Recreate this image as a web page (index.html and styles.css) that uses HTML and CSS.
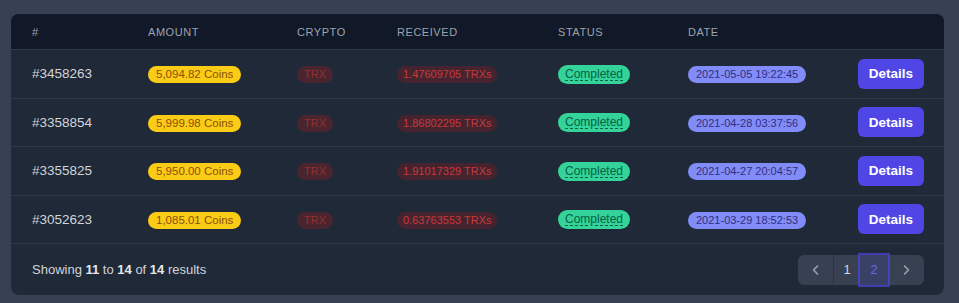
FILE: index.html
```html
<!DOCTYPE html>
<html lang="en">
<head>
<meta charset="utf-8">
<title>Transactions</title>
<link rel="stylesheet" href="styles.css">
</head>
<body>
<div class="card">
  <div class="row head">
    <div>#</div>
    <div>Amount</div>
    <div>Crypto</div>
    <div>Received</div>
    <div>Status</div>
    <div>Date</div>
    <div></div>
  </div>
  <div class="row">
    <div class="id">#3458263</div>
    <div><span class="badge coins">5,094.82 Coins</span></div>
    <div><span class="badge trx">TRX</span></div>
    <div><span class="badge recv">1.47609705 TRXs</span></div>
    <div><span class="badge done"><span class="ul">Completed</span></span></div>
    <div><span class="badge date">2021-05-05 19:22:45</span></div>
    <div><button class="btn">Details</button></div>
  </div>
  <div class="row">
    <div class="id">#3358854</div>
    <div><span class="badge coins">5,999.98 Coins</span></div>
    <div><span class="badge trx">TRX</span></div>
    <div><span class="badge recv">1.86802295 TRXs</span></div>
    <div><span class="badge done"><span class="ul">Completed</span></span></div>
    <div><span class="badge date">2021-04-28 03:37:56</span></div>
    <div><button class="btn">Details</button></div>
  </div>
  <div class="row">
    <div class="id">#3355825</div>
    <div><span class="badge coins">5,950.00 Coins</span></div>
    <div><span class="badge trx">TRX</span></div>
    <div><span class="badge recv">1.91017329 TRXs</span></div>
    <div><span class="badge done"><span class="ul">Completed</span></span></div>
    <div><span class="badge date">2021-04-27 20:04:57</span></div>
    <div><button class="btn">Details</button></div>
  </div>
  <div class="row">
    <div class="id">#3052623</div>
    <div><span class="badge coins">1,085.01 Coins</span></div>
    <div><span class="badge trx">TRX</span></div>
    <div><span class="badge recv">0.63763553 TRXs</span></div>
    <div><span class="badge done"><span class="ul">Completed</span></span></div>
    <div><span class="badge date">2021-03-29 18:52:53</span></div>
    <div><button class="btn">Details</button></div>
  </div>
  <div class="footer">
    <p class="showing">Showing <b>11</b> to <b>14</b> of <b>14</b> results</p>
    <nav class="pager">
      <a class="pg prev" href="#"><svg width="14" height="14" viewBox="0 0 14 14"><path d="M8.5 3 L4.5 7 L8.5 11" fill="none" stroke="currentColor" stroke-width="1.6" stroke-linecap="round" stroke-linejoin="round"/></svg></a>
      <a class="pg num" href="#">1</a>
      <a class="pg num active" href="#">2</a>
      <a class="pg next" href="#"><svg width="14" height="14" viewBox="0 0 14 14"><path d="M5.5 3 L9.5 7 L5.5 11" fill="none" stroke="currentColor" stroke-width="1.6" stroke-linecap="round" stroke-linejoin="round"/></svg></a>
    </nav>
  </div>
</div>
</body>
</html>
```
FILE: styles.css
```css
* { box-sizing: border-box; }
html, body { margin: 0; }
body {
  background: #374151;
  padding: 14px 15px 0 11px;
  font-family: "Liberation Sans", Arial, sans-serif;
  color: #d1d5db;
  height: 303px;
  overflow: hidden;
}
.card {
  background: #1f2937;
  border-radius: 8px;
  overflow: hidden;
}
.row {
  display: grid;
  grid-template-columns: 116px 149px 100px 161px 130px 1fr auto;
  align-items: center;
  padding: 0 20px 0 21px;
  height: 48.5px;
  border-top: 1px solid #2f3947;
}
.row.head {
  height: 35px;
  border-top: none;
  background: #111827;
  color: #9ca3af;
  font-size: 11px;
  text-transform: uppercase;
  letter-spacing: 0.05em;
}
.id { font-size: 13.5px; color: #d1d5db; }
.badge {
  display: inline-block;
  font-size: 11px;
  line-height: 17px;
  padding: 0 8px;
  border-radius: 9px;
  white-space: nowrap;
}
.coins { background: #facc15; color: #8a4f0a; font-size: 11.5px; }
.trx { background: #4a2530; color: #93302f; padding: 0 7px; }
.recv { background: #46242f; color: #c83a3b; padding: 0 6px; }
.done {
  background: #34d399;
  color: #065f46;
  font-size: 12px;
  line-height: 19px;
  padding: 0 7px;
  border-radius: 10px;
}
.ul { text-decoration: underline dashed #065f46; text-underline-offset: 2px; }
.date { background: #818cf8; color: #312e81; padding: 0 8px; }
.btn {
  display: block;
  width: 66px;
  height: 30px;
  border: none;
  border-radius: 6px;
  background: #4f46e5;
  color: #ffffff;
  font-family: inherit;
  font-weight: bold;
  font-size: 13.5px;
  padding: 0;
}
.footer {
  display: flex;
  align-items: center;
  justify-content: space-between;
  height: 52px;
  padding: 0 20px 0 21px;
  border-top: 1px solid #2f3947;
}
.showing { margin: 0; font-size: 13px; color: #d1d5db; }
.showing b { color: #e5e7eb; }
.pager {
  display: flex;
  height: 30px;
  background: #374151;
  border-radius: 6px;
}
.pg {
  display: flex;
  align-items: center;
  justify-content: center;
  color: #d1d5db;
  text-decoration: none;
  font-size: 13px;
}
.prev { width: 36px; color: #9ca3af; border-right: 1px solid #2d3442; }
.next { width: 36px; color: #9ca3af; }
.num { width: 26px; }
.num.active {
  width: 28px;
  color: #6366f1;
  outline: 2px solid rgba(79, 70, 229, 0.7);
  background: #394266;
}
```
